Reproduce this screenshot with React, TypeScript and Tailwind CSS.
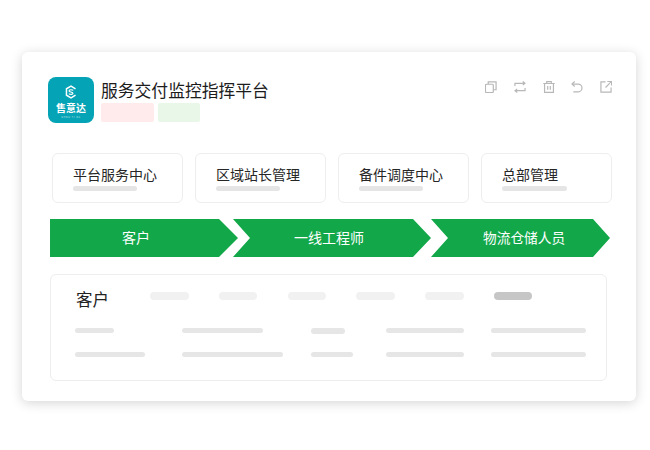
const font = { fontFamily: '"Noto Sans CJK SC", "Noto Sans", sans-serif' };

function Bar({ w, h = "h-[5px]", color = "bg-[#e6e6e6]" }: { w: string; h?: string; color?: string }) {
  return <div className={`${w} ${h} ${color} rounded-full`} />;
}

function Icon({ children }: { children: React.ReactNode }) {
  return (
    <svg width="12" height="12" viewBox="0.5 0.5 13 13" fill="none" stroke="#b8b8b8" strokeWidth="1.3" className="block">
      {children}
    </svg>
  );
}

function Logo() {
  return (
    <div className="w-[46px] h-[46px] rounded-[8px] bg-[#04a3b5] flex flex-col items-center pt-[8px] text-white shrink-0">
      <svg width="14" height="14" viewBox="0 0 16 17" fill="none" stroke="#fff" className="block">
        <path d="M13.5 4.6 8 1.4 2.5 4.6v7.8L8 15.6l5.5-3.2" strokeWidth="1.8" />
        <path d="M10.7 6.6C10 5.7 6 5.3 5.6 7c-.4 2 4.9 1.1 4.8 3.2-.1 1.6-4 1.3-5 .2" strokeWidth="1.4" />
      </svg>
      <div className="text-[10px] leading-[10px] font-bold mt-[4px] whitespace-nowrap">售意达</div>
      <div className="text-[2.5px] leading-[2px] mt-[3px] tracking-[0.6px] whitespace-nowrap opacity-70">SHOU YI DA</div>
    </div>
  );
}

const cards = ["平台服务中心", "区域站长管理", "备件调度中心", "总部管理"];

const pills = ["bg-[#f1f1f1]", "bg-[#f1f1f1]", "bg-[#f1f1f1]", "bg-[#f1f1f1]", "bg-[#f1f1f1]", "bg-[#c6c6c6]"];

export default function App() {
  return (
    <div className="w-[650px] h-[450px] bg-white pt-[52px] pl-[22px] overflow-hidden" style={font}>
      <div className="w-[614px] h-[349px] bg-white rounded-[6px] shadow-[0_2px_12px_rgba(0,0,0,0.17)] pt-[25px] relative">
        <div className="flex pl-[26px]">
          <Logo />
          <div className="ml-[7px]">
            <div className="text-[16.8px] leading-[26px] text-[#1c1c1c] whitespace-nowrap">服务交付监控指挥平台</div>
            <div className="flex gap-[4px]">
              <div className="w-[53px] h-[19px] rounded-[2px] bg-[#ffebeb]" />
              <div className="w-[42px] h-[19px] rounded-[2px] bg-[#e8f7e8]" />
            </div>
          </div>
          <div className="ml-auto mr-[24px] mt-[4px] flex gap-[16.75px] h-[12px]">
            <Icon>
              <rect x="1" y="4" width="8.5" height="9" rx="1" />
              <path d="M4 4V1.5h8.5V10H9.5" />
            </Icon>
            <Icon>
              <path d="M1.5 6V3h10.5M10 1l2.4 2L10 5" />
              <path d="M12.5 8v3H2M4 9l-2.4 2L4 13" />
            </Icon>
            <Icon>
              <path d="M.8 3.2h12.4M4.5 3V1.2h5V3" />
              <path d="M2.2 3.2v9.6h9.6V3.2" />
              <path d="M5.6 6v4M8.4 6v4" />
            </Icon>
            <Icon>
              <path d="M4.5 1 1.6 3.8l2.9 2.7" />
              <path d="M2 3.8h6.2c2.4 0 4.2 1.9 4.2 4.2s-1.8 4.2-4.2 4.2H3" />
            </Icon>
            <Icon>
              <path d="M6.5 1.5h-5v11h11V7.5" />
              <path d="M6.5 7.5 12.5 1.5M8.5 1h4.5v4.5" />
            </Icon>
          </div>
        </div>

        <div className="flex gap-[12px] pl-[30px] mt-[30px]">
          {cards.map((c, i) => (
            <div key={c} className="w-[131px] h-[50px] border border-[#eeeeee] rounded-[6px] pl-[20px] pt-[10px]">
              <div className="text-[14px] leading-[21px] text-[#262626] whitespace-nowrap">{c}</div>
              <div className="mt-[1px]">
                <Bar w={i === 3 ? "w-[65px]" : "w-[64px]"} h="h-[5px]" color="bg-[#e5e5e5]" />
              </div>
            </div>
          ))}
        </div>

        <div className="flex pl-[28px] mt-[16px] h-[38px] text-white text-[14px] leading-[37px] whitespace-nowrap">
          <div className="w-[188px] pl-[72px] bg-[#12a84a] [clip-path:polygon(0_0,169px_0,188px_19px,169px_38px,0_38px)]">客户</div>
          <div className="w-[198px] -ml-[5px] pl-[61px] bg-[#12a84a] [clip-path:polygon(0_0,180px_0,198px_19px,180px_38px,0_38px,17px_19px)]">一线工程师</div>
          <div className="w-[180px] pl-[52px] text-[13.7px] bg-[#12a84a] [clip-path:polygon(0_0,162px_0,179px_19px,162px_38px,0_38px,17px_19px)]">物流仓储人员</div>
        </div>

        <div className="ml-[28px] mt-[17px] w-[557px] h-[107px] border border-[#eeeeee] rounded-[6px] pl-[24px] pt-[10px]">
          <div className="flex items-start h-[29px]">
            <div className="w-[75px] text-[16.5px] leading-[28px] text-[#222222] pl-[1px]">客户</div>
            <div className="flex gap-[30.3px] mt-[7px]">
              {pills.map((p, i) => (
                <div key={i} className={`w-[38.5px] h-[8px] rounded-full ${p}`} />
              ))}
            </div>
          </div>
          <div className="mt-[14px] grid grid-cols-[107px_129px_75px_105px_auto] items-start h-[6px]">
            <Bar w="w-[39px]" />
            <Bar w="w-[81px]" />
            <Bar w="w-[34px]" h="h-[6px]" />
            <Bar w="w-[78px]" />
            <Bar w="w-[95px]" />
          </div>
          <div className="mt-[18px] grid grid-cols-[107px_129px_75px_105px_auto] items-start h-[5px]">
            <Bar w="w-[70px]" />
            <Bar w="w-[101px]" />
            <Bar w="w-[42px]" />
            <Bar w="w-[78px]" />
            <Bar w="w-[95px]" />
          </div>
        </div>
      </div>
    </div>
  );
}
